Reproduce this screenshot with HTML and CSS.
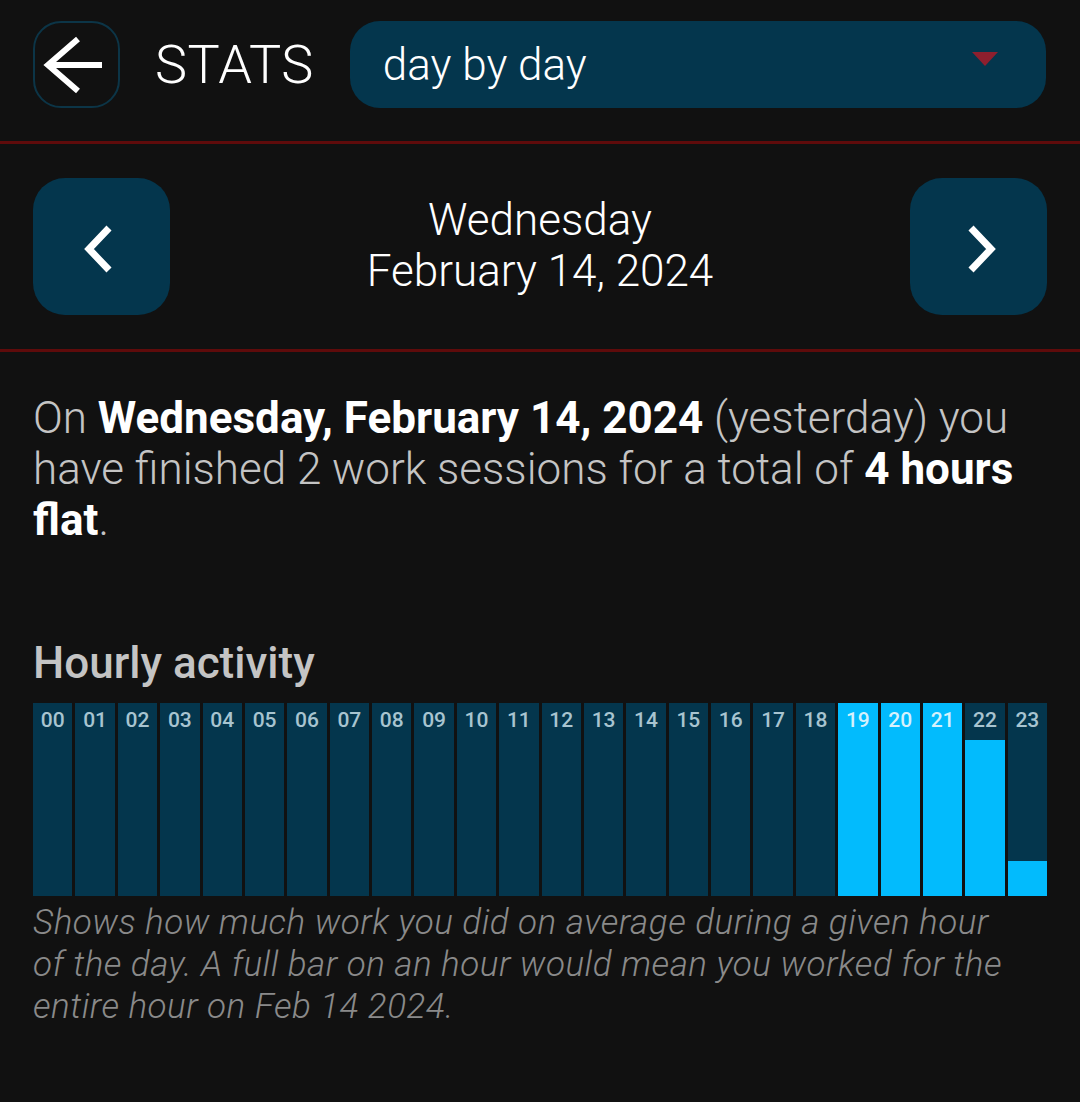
FILE: index.html
```html
<!DOCTYPE html>
<html lang="en">
<head>
  <meta charset="UTF-8" />
  <meta name="viewport" content="width=device-width, initial-scale=1.0"/>
  <title>Stats</title>
  <link rel="stylesheet" href="styles.css">
</head>

<body>
  <header class="top-bar">
    <button class="back-btn" aria-label="Back">
      <svg width="87" height="87" viewBox="0 0 87 87">
        <path d="M45 18 L15 44 L45 70 M15 44 L69 44" fill="none" stroke="#fff" stroke-width="6" stroke-linecap="butt" stroke-linejoin="miter"/>
      </svg>
    </button>
    <h1 class="title">STATS</h1>
    <div class="mode-select">
      <span>day by day</span>
      <span class="caret"></span>
    </div>
  </header>

  <!-- day switcher -->
  <section class="day-nav">
    <button class="nav-btn" aria-label="Previous day">
      <svg width="137" height="137" viewBox="0 0 137 137">
        <path d="M76 50 L56 71 L76 92" fill="none" stroke="#fff" stroke-width="7"/>
      </svg>
    </button>
    <div class="day-label">
      <div>Wednesday</div>
      <div>February 14, 2024</div>
    </div>
    <button class="nav-btn" aria-label="Next day">
      <svg width="137" height="137" viewBox="0 0 137 137">
        <path d="M61 50 L81 71 L61 92" fill="none" stroke="#fff" stroke-width="7"/>
      </svg>
    </button>
  </section>

  <main class="content">
    <p class="summary">
      On <b>Wednesday, February 14, 2024</b> (yesterday) you have finished 2 work sessions for a total of <b>4 hours flat</b>.
    </p>

    <h2 class="chart-title">Hourly activity</h2>
    <div class="hour-chart" id="hourChart"></div>
    <p class="chart-note">
      Shows how much work you did on average during a given hour of the day. A full bar on an hour would mean you worked for the entire hour on Feb 14 2024.
    </p>
  </main>

  <script>
    // fraction of each hour spent working
    const hours = [0,0,0,0,0,0,0,0,0,0,0,0,0,0,0,0,0,0,0,1,1,1,0.81,0.18];

    const chart = document.getElementById('hourChart');
    hours.forEach((value, i) => {
      const bar = document.createElement('div');
      bar.className = 'hour-bar';
      if (value >= 0.9) bar.classList.add('full');

      const fill = document.createElement('div');
      fill.className = 'hour-fill';
      fill.style.height = (value * 100) + '%';

      const label = document.createElement('span');
      label.className = 'hour-label';
      label.textContent = String(i).padStart(2, '0');

      bar.appendChild(fill);
      bar.appendChild(label);
      chart.appendChild(bar);
    });
  </script>
</body>
</html>
```

FILE: styles.css
```css
:root {
  --bg: #111111;
  --panel: #04364d;
  --bright: #02bbfd;
  --divider: #5f0b0b;
  --caret: #8e1f2e;
  --text: #ffffff;
  --soft-text: #c4c4c4;
  --muted: #8a8a8a;
}

body {
  margin: 0;
  background-color: var(--bg);
  color: var(--text);
  font-family: Roboto, 'Noto Sans', sans-serif;
}

button {
  border: none;
  padding: 0;
  background: none;
  cursor: pointer;
}

button svg {
  display: block;
}

.top-bar {
  display: flex;
  align-items: center;
  padding: 21px 34px 33px 33px;
  border-bottom: 3px solid var(--divider);
}

.back-btn {
  width: 87px;
  height: 87px;
  box-sizing: border-box;
  border: 2px solid #0c3547;
  border-radius: 28px;
  display: flex;
  align-items: center;
  justify-content: center;
}

.back-btn svg {
  margin: -2px;
}

.title {
  margin: 0 0 0 35px;
  font-size: 54px;
  font-weight: 300;
  letter-spacing: 0.5px;
}

.mode-select {
  flex: 1;
  margin-left: 36px;
  height: 87px;
  display: flex;
  align-items: center;
  justify-content: space-between;
  padding: 0 48px 0 33px;
  background-color: var(--panel);
  border-radius: 30px;
  font-size: 44px;
  font-weight: 300;
}

.caret {
  width: 0;
  height: 0;
  border-left: 13px solid transparent;
  border-right: 13px solid transparent;
  border-top: 14px solid var(--caret);
  margin-top: -12px;
}

.day-nav {
  display: flex;
  align-items: center;
  justify-content: space-between;
  padding: 34px 33px 34px 33px;
  border-bottom: 3px solid var(--divider);
}

.nav-btn {
  width: 137px;
  height: 137px;
  background-color: var(--panel);
  border-radius: 32px;
}

.day-label {
  text-align: center;
  font-size: 44px;
  font-weight: 300;
  line-height: 51px;
  margin-top: -2px;
}

.content {
  padding: 0 33px;
}

.summary {
  margin: 41px 0 0;
  font-size: 44px;
  line-height: 51px;
  font-weight: 300;
  color: var(--soft-text);
}

.summary b {
  color: var(--text);
  font-weight: 700;
}

.chart-title {
  margin: 91px 0 0;
  font-size: 44px;
  line-height: 52px;
  font-weight: 500;
  color: var(--soft-text);
}

.hour-chart {
  margin-top: 14px;
  height: 193px;
  display: grid;
  grid-template-columns: repeat(24, 1fr);
  gap: 3px;
}

.hour-bar {
  position: relative;
  background-color: var(--panel);
  display: flex;
  flex-direction: column;
  justify-content: flex-end;
}

.hour-fill {
  background-color: var(--bright);
}

.hour-label {
  position: absolute;
  top: 5px;
  left: 0;
  right: 0;
  text-align: center;
  font-size: 21px;
  font-weight: 500;
  color: #a8c4d0;
}

.hour-bar.full .hour-label {
  color: #d6f1fc;
}

.chart-note {
  margin: 6px 32px 0 0;
  font-size: 35px;
  line-height: 42px;
  letter-spacing: 0.5px;
  font-style: italic;
  font-weight: 300;
  color: var(--muted);
}
```
